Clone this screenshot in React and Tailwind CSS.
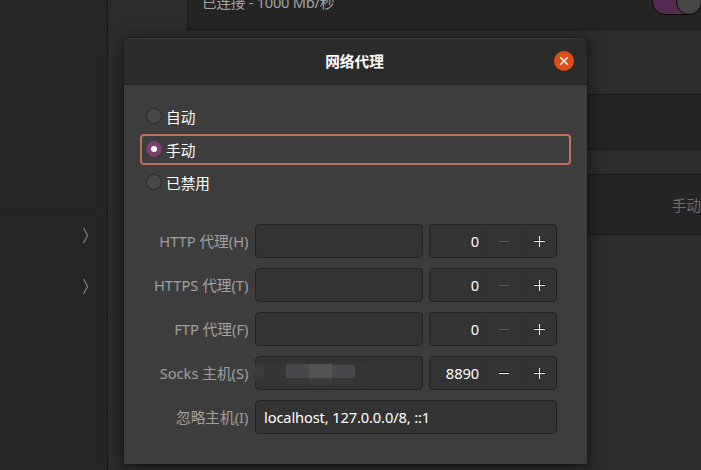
import React from "react";

function Radio({ label, checked }) {
  return (
    <div
      className={
        "flex h-[31px] items-center rounded-[4px] border-2 pl-[4px] " +
        (checked ? "border-[#bd7259]" : "border-transparent")
      }
    >
      <span
        className={
          "-mt-[2px] flex size-4 shrink-0 items-center justify-center rounded-full border " +
          (checked ? "border-[#723d6a] bg-[#7b4173]" : "border-[#292929] bg-[#484848]")
        }
      >
        {checked && <span className="size-[6px] rounded-full bg-white" />}
      </span>
      <span className="ml-[4px] leading-[22px] text-white">{label}</span>
    </div>
  );
}

function Minus({ disabled }) {
  return (
    <svg width="12" height="12" viewBox="0 0 12 12" shapeRendering="crispEdges">
      {!disabled && <path d="M1 5h10v1H1z" fill="#111" />}
      <path d="M1 6h10v1H1z" fill={disabled ? "#555555" : "#eeeeee"} />
    </svg>
  );
}

function Plus() {
  return (
    <svg width="12" height="12" viewBox="0 0 12 12" shapeRendering="crispEdges">
      <path d="M1 5h11v1H1z" fill="#111" />
      <path d="M1 6h11v1H1zM6 1h1v11H6z" fill="#eeeeee" />
    </svg>
  );
}

function FieldLabel({ children }) {
  return (
    <span className="w-[109px] shrink-0 whitespace-nowrap pr-[0.6px] text-right leading-[22px] text-[#a0a0a0]">
      {children}
    </span>
  );
}

function ProxyRow({ label, port, children }) {
  return (
    <div className="flex h-[34px] items-center">
      <FieldLabel>{label}</FieldLabel>
      <div className="ml-[6px] h-[34px] w-[168px] rounded-[4px] border border-[#232323] bg-[#333333]">
        {children}
      </div>
      <div className="ml-[6px] flex h-[34px] w-[128px] overflow-hidden rounded-[4px] border border-[#232323] bg-[#333333]">
        <span className="mt-[5px] w-[49px] text-right leading-[22px] tracking-[-0.1px] text-white">{port}</span>
        <span className="ml-[7px] flex w-[35px] items-center justify-center border-l border-[#2f2f2f]">
          <Minus disabled={port === "0"} />
        </span>
        <span className="flex w-[35px] items-center justify-center border-l border-[#2f2f2f]">
          <Plus />
        </span>
      </div>
    </div>
  );
}

function RedactedHost() {
  return (
    <div className="-ml-[2px] mt-[6px] flex h-[22px] w-[117px] items-start overflow-hidden rounded-[8px] bg-[#353535]">
      <span className="mt-[1px] h-[13px] w-[10px] rounded-l-[6px] bg-[#3b3b3b]" />
      <span className="ml-[22px] mt-[1px] h-[14px] w-[23px] bg-[#48484a]" />
      <span className="mt-[1px] flex h-[21px] w-[23px] flex-col bg-[#3a3a3a]">
        <span className="h-[14px] bg-[#535353]" />
      </span>
      <span className="mt-[2px] h-[13px] w-[23px] bg-[#48484a]" />
    </div>
  );
}

function Sidebar() {
  const arrow = (
    <svg width="6" height="17" viewBox="0 0 6 17" fill="none" stroke="#898989" strokeWidth="1.1">
      <path d="M.5 1 4.6 8.5.5 16" />
    </svg>
  );
  return (
    <aside className="flex w-[108px] shrink-0 flex-col border-r border-[#171717] bg-[#252525]">
      <div className="h-[5px] border-b border-[#222222]" />
      <div className="h-[205px] border-b border-[#222222]" />
      <div className="h-[103px] border-b border-[#222222]">
        <div className="flex h-[50px] items-center justify-end pr-[18px]">{arrow}</div>
        <div className="flex h-[52px] items-center justify-end pr-[18px]">{arrow}</div>
      </div>
      <div className="h-[103px] border-b border-[#222222]" />
    </aside>
  );
}

function Settings() {
  return (
    <main className="flex w-[593px] flex-col pl-[79px]">
      <section className="flex h-[30px] justify-between border-b border-l border-[#181818] bg-[#242424]">
        <span className="-mt-[9px] ml-[14px] leading-[22px] tracking-[-0.27px] text-[#a3a3a3]">已连接 - 1000 Mb/秒</span>
        <span className="-mr-[1px] -mt-[11px] flex h-[26px] w-[50px] shrink-0 justify-end rounded-full border border-[#080808] bg-[#552c50]">
          <span className="-mr-[1px] -mt-[1px] size-[26px] rounded-full border border-[#080808] bg-[#464646]" />
        </span>
      </section>
      <section className="mt-[64px] h-[56px] border-y border-l border-[#181818] bg-[#242424]" />
      <section className="mt-[24px] flex h-[61px] justify-end overflow-hidden border-y border-l border-[#181818] bg-[#242424]">
        <span className="mt-[19px] whitespace-nowrap leading-[22px] text-[#6c6c6c]">手动</span>
      </section>
    </main>
  );
}

function ProxyDialog() {
  return (
    <div
      role="dialog"
      className="absolute left-[124px] top-[38px] flex h-[426px] w-[463px] flex-col overflow-hidden rounded-t-[8px] bg-[#3d3d3d] shadow-[0_3px_16px_3px_rgba(0,0,0,0.42),0_0_0_1px_rgba(0,0,0,0.2)]"
    >
      <header className="flex h-[47px] shrink-0 items-center rounded-t-[8px] border-b border-t border-b-[#222222] border-t-[#3a3a3a] bg-[#2b2b2b] pb-[2px] pr-[13px]">
        <h1 className="ml-[31px] flex-1 text-center font-bold leading-[22px] text-white">网络代理</h1>
        <button className="flex size-5 items-center justify-center rounded-full bg-[#e04c1a]">
          <svg width="10" height="10" viewBox="0 0 10 10" stroke="#fff" strokeWidth="1.5">
            <path d="M1.2 1.2 8.8 8.8M8.8 1.2 1.2 8.8" />
          </svg>
        </button>
      </header>
      <div className="mx-4 mt-[16px] flex flex-col gap-[2px]">
        <Radio label="自动" />
        <Radio label="手动" checked />
        <Radio label="已禁用" />
      </div>
      <div className="ml-4 mt-[26px] flex flex-col gap-[10px]">
        <ProxyRow label="HTTP 代理(H)" port="0" />
        <ProxyRow label="HTTPS 代理(T)" port="0" />
        <ProxyRow label="FTP 代理(F)" port="0" />
        <ProxyRow label="Socks 主机(S)" port="8890">
          <RedactedHost />
        </ProxyRow>
        <div className="flex h-[34px] items-center">
          <FieldLabel>忽略主机(I)</FieldLabel>
          <div className="ml-[6px] flex h-[34px] w-[302px] items-center rounded-[4px] border border-[#232323] bg-[#333333] pl-[8px] text-white">
            <span className="leading-[22px] tracking-[-0.13px]">localhost, 127.0.0.0/8, ::1</span>
          </div>
        </div>
      </div>
    </div>
  );
}

export default function App() {
  return (
    <div className="relative flex h-[470px] w-[701px] overflow-hidden bg-[#2c2c2c] font-['Noto_Sans','Noto_Sans_CJK_SC',sans-serif] text-[14.67px]">
      <Sidebar />
      <Settings />
      <ProxyDialog />
    </div>
  );
}
